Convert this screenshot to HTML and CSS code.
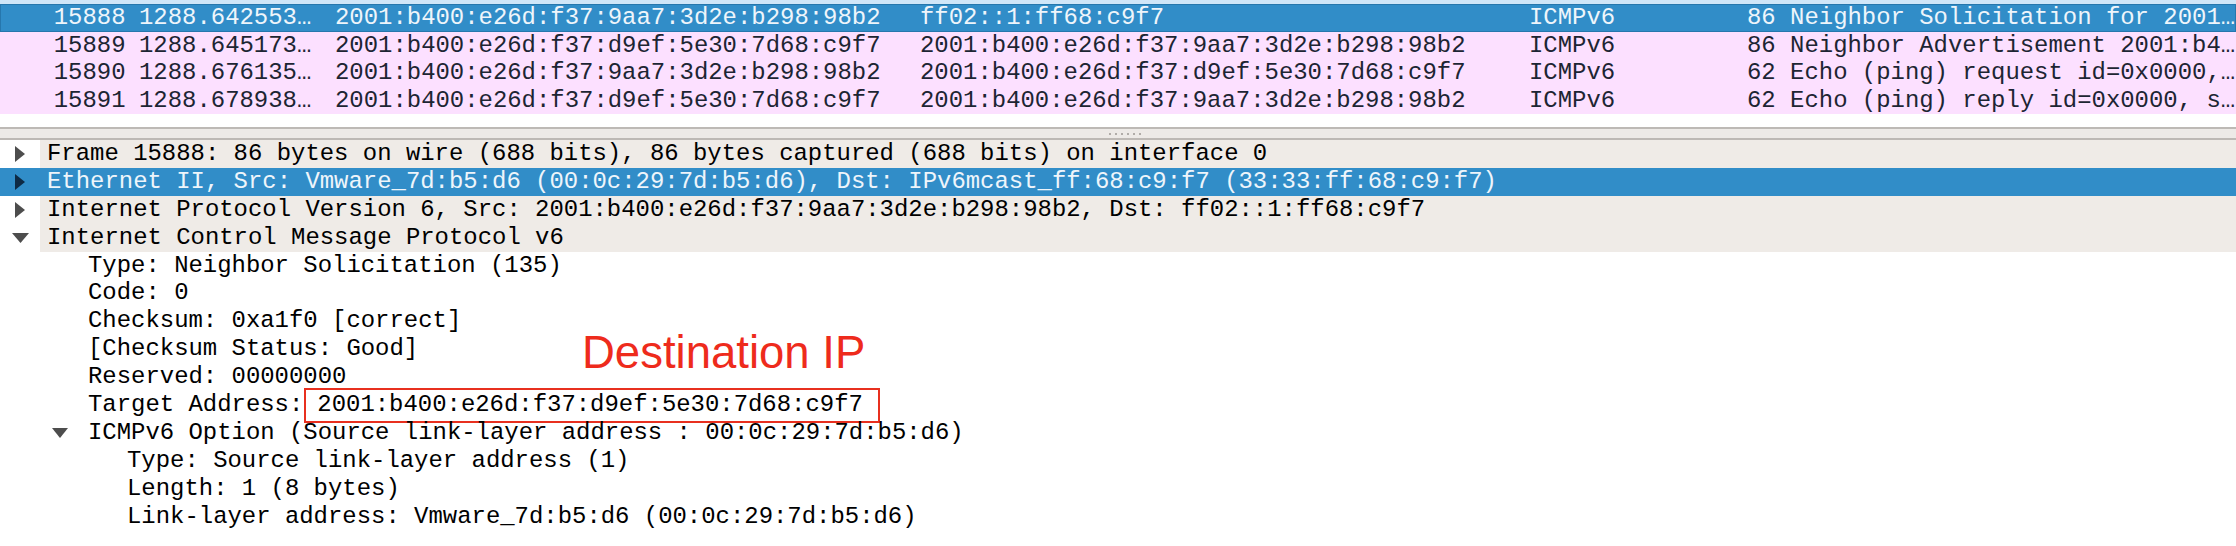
FILE: index.html
```html
<!DOCTYPE html>
<html>
<head>
<meta charset="utf-8">
<link rel="stylesheet" href="styles.css">
</head>
<body>
<div class="screen">
  <div class="strip"></div>
  <div class="packets">
    <div class="prow sel"><span class="c-no">15888</span><span>1288.642553…</span><span>2001:b400:e26d:f37:9aa7:3d2e:b298:98b2</span><span>ff02::1:ff68:c9f7</span><span>ICMPv6</span><span>86 Neighbor Solicitation for 2001…</span></div>
    <div class="prow"><span class="c-no">15889</span><span>1288.645173…</span><span>2001:b400:e26d:f37:d9ef:5e30:7d68:c9f7</span><span>2001:b400:e26d:f37:9aa7:3d2e:b298:98b2</span><span>ICMPv6</span><span>86 Neighbor Advertisement 2001:b4…</span></div>
    <div class="prow"><span class="c-no">15890</span><span>1288.676135…</span><span>2001:b400:e26d:f37:9aa7:3d2e:b298:98b2</span><span>2001:b400:e26d:f37:d9ef:5e30:7d68:c9f7</span><span>ICMPv6</span><span>62 Echo (ping) request id=0x0000,…</span></div>
    <div class="prow"><span class="c-no">15891</span><span>1288.678938…</span><span>2001:b400:e26d:f37:d9ef:5e30:7d68:c9f7</span><span>2001:b400:e26d:f37:9aa7:3d2e:b298:98b2</span><span>ICMPv6</span><span>62 Echo (ping) reply id=0x0000, s…</span></div>
  </div>
  <div class="splitter"><div class="grip"><i></i><i></i><i></i><i></i><i></i><i></i></div></div>
  <div class="tree">
    <div class="trow top"><span class="arrow"><svg width="10" height="16" viewBox="0 0 10 16"><polygon points="0,0 10,8 0,16" fill="#4d4d4d"/></svg></span><span class="label">Frame 15888: 86 bytes on wire (688 bits), 86 bytes captured (688 bits) on interface 0</span></div>
    <div class="trow top tsel"><span class="arrow"><svg width="10" height="16" viewBox="0 0 10 16"><polygon points="0,0 10,8 0,16" fill="#0e2a44"/></svg></span><span class="label">Ethernet II, Src: Vmware_7d:b5:d6 (00:0c:29:7d:b5:d6), Dst: IPv6mcast_ff:68:c9:f7 (33:33:ff:68:c9:f7)</span></div>
    <div class="trow top"><span class="arrow"><svg width="10" height="16" viewBox="0 0 10 16"><polygon points="0,0 10,8 0,16" fill="#4d4d4d"/></svg></span><span class="label">Internet Protocol Version 6, Src: 2001:b400:e26d:f37:9aa7:3d2e:b298:98b2, Dst: ff02::1:ff68:c9f7</span></div>
    <div class="trow top"><span class="arrow"><svg width="17" height="10" viewBox="0 0 17 10"><polygon points="0,0 17,0 8.5,10" fill="#4d4d4d"/></svg></span><span class="label">Internet Control Message Protocol v6</span></div>
    <div class="trow l1"><span class="label">Type: Neighbor Solicitation (135)</span></div>
    <div class="trow l1"><span class="label">Code: 0</span></div>
    <div class="trow l1"><span class="label">Checksum: 0xa1f0 [correct]</span></div>
    <div class="trow l1"><span class="label">[Checksum Status: Good]</span></div>
    <div class="trow l1"><span class="label">Reserved: 00000000</span></div>
    <div class="trow l1"><span class="label">Target Address:<span class="mark">2001:b400:e26d:f37:d9ef:5e30:7d68:c9f7</span></span></div>
    <div class="trow l1a"><span class="arrow"><svg width="16" height="10" viewBox="0 0 16 10"><polygon points="0,0 16,0 8,10" fill="#4d4d4d"/></svg></span><span class="label">ICMPv6 Option (Source link-layer address : 00:0c:29:7d:b5:d6)</span></div>
    <div class="trow l2"><span class="label">Type: Source link-layer address (1)</span></div>
    <div class="trow l2"><span class="label">Length: 1 (8 bytes)</span></div>
    <div class="trow l2"><span class="label">Link-layer address: Vmware_7d:b5:d6 (00:0c:29:7d:b5:d6)</span></div>
  </div>
  <div class="note">Destination IP</div>
</div>
</body>
</html>
```

FILE: styles.css
```css
html, body {
  margin: 0;
  padding: 0;
  background: #ffffff;
}
.screen {
  position: relative;
  width: 2236px;
  height: 546px;
  overflow: hidden;
  font-family: "Liberation Mono", "DejaVu Sans Mono", monospace;
  font-size: 23.93px;
}
.strip {
  height: 4px;
  background: #cfe6f8;
}
.packets {
  display: flex;
  flex-direction: column;
}
.prow {
  display: grid;
  grid-template-columns: 139px 196px 585px 609px 218px 1fr;
  height: 27.5px;
  line-height: 27.5px;
  background: #fce0ff;
  color: #1d2533;
  white-space: nowrap;
}
.prow .c-no {
  text-align: right;
  padding-right: 13.5px;
}
.prow.sel {
  background: #318dc8;
  color: #eef5fb;
  box-shadow: inset 0 0 0 1px #2677ad;
}
.splitter {
  margin-top: 13px;
  height: 9px;
  border-top: 2px solid #bdb9b5;
  border-bottom: 2px solid #bdb9b5;
  background: #edeae7;
  display: flex;
  justify-content: center;
  align-items: center;
}
.grip {
  display: flex;
  gap: 4px;
  margin-left: 14px;
}
.grip i {
  width: 2px;
  height: 2px;
  background: #b0aca8;
}
.tree {
  display: flex;
  flex-direction: column;
  color: #000000;
}
.trow {
  display: flex;
  height: 27.9px;
  line-height: 27.9px;
  white-space: nowrap;
}
.trow .arrow {
  width: 40px;
  flex: none;
  display: flex;
  align-items: center;
  justify-content: center;
  background: #ffffff;
}
.trow.top .label {
  flex: 1;
  background: #efebe7;
  padding-left: 7px;
}
.trow.tsel .arrow,
.trow.tsel .label {
  background: #318dc8;
  color: #eef5fb;
}
.trow.tsel {
  box-shadow: inset 0 0 0 1px #2677ad;
}
.trow.l1 .label {
  padding-left: 88px;
}
.trow.l1a .arrow {
  margin-left: 40px;
  width: 39px;
  justify-content: center;
}
.trow.l1a .label {
  padding-left: 9px;
}
.trow.l2 .label {
  padding-left: 127px;
}
.mark {
  border: 2px solid #e8301f;
  padding: 1px 15px 3px 11px;
  margin-left: 1px;
}
.note {
  position: absolute;
  left: 582px;
  top: 330px;
  font-family: "Liberation Sans", Arial, sans-serif;
  font-size: 45.5px;
  line-height: 45.5px;
  color: #ee2b1c;
}
```
